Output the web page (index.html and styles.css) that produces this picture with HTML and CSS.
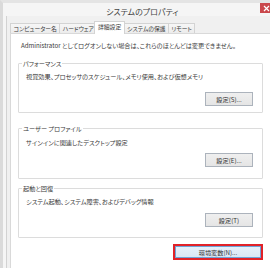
FILE: index.html
```html
<!DOCTYPE html>
<html lang="ja">
<head>
    <meta charset="UTF-8">
    <meta name="viewport" content="width=device-width, initial-scale=1.0">
    <title>システムのプロパティ</title>
    <link rel="stylesheet" href="styles.css">
</head>
<body>
    <div class="window">
        <div class="titlebar">
            <span class="title">システムのプロパティ</span>
            <span class="close">
                <svg width="7" height="7" viewBox="0 0 7 7"><path d="M1 1L6 6M6 1L1 6" stroke="#fff" stroke-width="1.2"/></svg>
            </span>
        </div>
        <div class="client">
            <ul class="tabs">
                <li class="tab">コンピューター名</li>
                <li class="tab">ハードウェア</li>
                <li class="tab active">詳細設定</li>
                <li class="tab">システムの保護</li>
                <li class="tab">リモート</li>
            </ul>
            <div class="panel">
                <p class="note">Administrator としてログオンしない場合は、これらのほとんどは変更できません。</p>

                <fieldset class="group group-perf">
                    <legend>パフォーマンス</legend>
                    <p class="desc">視覚効果、プロセッサのスケジュール、メモリ使用、および仮想メモリ</p>
                    <div class="actions"><button class="btn">設定(S)...</button></div>
                </fieldset>

                <fieldset class="group group-profile">
                    <legend>ユーザー プロファイル</legend>
                    <p class="desc">サインインに関連したデスクトップ設定</p>
                    <div class="actions"><button class="btn">設定(E)...</button></div>
                </fieldset>

                <fieldset class="group group-startup">
                    <legend>起動と回復</legend>
                    <p class="desc">システム起動、システム障害、およびデバッグ情報</p>
                    <div class="actions"><button class="btn">設定(T)</button></div>
                </fieldset>

                <div class="footer">
                    <div class="highlight"><button class="btn btn-env">環境変数(N)...</button></div>
                </div>
            </div>
        </div>
    </div>
</body>
</html>
```

FILE: styles.css
```css
/* ページ全体 */
body {
    margin: 0;
    height: 268px;
    overflow: hidden;
    background: #fff;
    font-family: "Noto Sans CJK JP", "Noto Sans", sans-serif;
    font-feature-settings: "palt";
    color: #3a3a3a;
}

/* ウィンドウ枠 */
.window {
    width: 267px;
    height: 265px;
    display: flex;
    flex-direction: column;
    background: #f5f5f5;
    border-top: 3px solid #e4e4e4;
    border-left: 3px solid #dadada;
}

.titlebar {
    height: 13px;
    flex: none;
    display: flex;
    padding-left: 103px;
}
.title {
    font-size: 8px;
    line-height: 13px;
    padding-top: 2px;
    color: #444;
    white-space: nowrap;
}
.close {
    margin-left: auto;
    width: 10px;
    height: 10px;
    display: flex;
    align-items: center;
    justify-content: flex-end;
    background: #c9474b;
}

/* クライアント領域 */
.client {
    flex: 1;
    display: flex;
    flex-direction: column;
    margin-left: 3px;
    border-left: 1px solid #d2d2d2;
    background: #f0f0f0;
    padding-top: 5px;
}

/* タブ */
.tabs {
    list-style: none;
    margin: 0 0 0 3px;
    padding: 0;
    height: 12px;
    flex: none;
    display: flex;
    align-items: flex-end;
}
.tab {
    height: 9px;
    padding: 0 2.5px;
    border: 1px solid #d3d3d3;
    border-bottom: none;
    margin-right: -1px;
    background: linear-gradient(#f6f6f6, #ececec);
    font-size: 5.8px;
    line-height: 9px;
    white-space: nowrap;
}
.tab.active {
    height: 12px;
    margin: 0 -1px -1px -2px;
    background: #fff;
    position: relative;
    z-index: 1;
    line-height: 10px;
}

/* タブパネル */
.panel {
    flex: 1;
    margin-left: 3px;
    background: #fff;
    border: 1px solid #d9d9d9;
    border-right: none;
    border-bottom: none;
    padding: 7px 7px 0 7px;
    font-size: 6.2px;
    line-height: 9px;
}

.note {
    margin: 0 0 8.5px 3px;
    white-space: nowrap;
}

/* グループボックス */
.group {
    margin: 0 0 4.5px 0;
    padding: 0 9px 10px 3px;
    border: 1px solid #dcdcdc;
    border-radius: 1px;
    min-inline-size: 0;
}
.group legend {
    padding: 0 1px;
    line-height: 9px;
    white-space: nowrap;
}
.desc {
    margin: 4px 0 0 4px;
    white-space: nowrap;
}
.actions {
    display: flex;
    justify-content: flex-end;
    margin-top: 7.5px;
}

.group-perf {
    margin-bottom: 10.5px;
    padding-bottom: 6px;
}
.group-perf .actions {
    margin-top: 11.5px;
}
.group-profile {
    padding-bottom: 11px;
}
.group-profile .desc {
    margin-top: 5px;
}
.group-profile .actions {
    margin-top: 6.5px;
}

/* ボタン */
.btn {
    width: 48px;
    height: 14px;
    padding: 0;
    border: 1px solid #acb3bc;
    background: linear-gradient(#efefef, #e5e5e5);
    font-family: inherit;
    font-feature-settings: "palt";
    font-size: 6.2px;
    color: #333;
}

.footer {
    display: flex;
    justify-content: flex-end;
    margin-top: 6px;
}
.highlight {
    width: 86px;
    height: 12px;
    border: 2px solid #e12228;
}
.btn-env {
    width: 100%;
    height: 100%;
    display: block;
    border: 1px solid #6fa3d6;
    background: linear-gradient(#e6f0fa, #d9e7f5);
}
```
